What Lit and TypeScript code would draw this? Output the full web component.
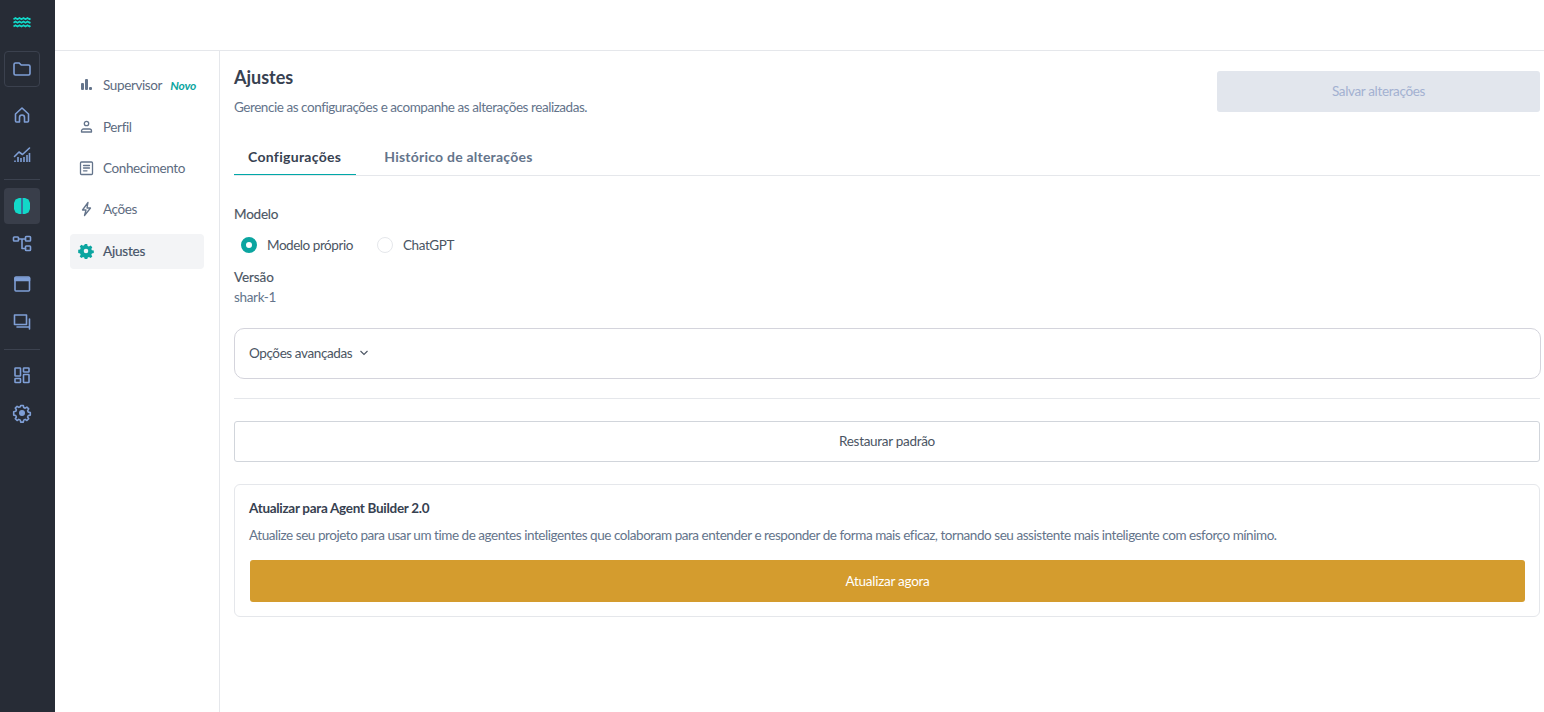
import { LitElement, html, css, svg } from "lit";
import { customElement } from "lit/decorators.js";

const railIcon = (body: unknown) =>
  html`<svg viewBox="0 0 20 20" width="20" height="20" fill="none" stroke="currentColor" stroke-width="1.6" stroke-linecap="round" stroke-linejoin="round">${body}</svg>`;
const navIcon = (body: unknown) =>
  html`<svg viewBox="0 0 16 16" width="16" height="16" fill="none" stroke="currentColor" stroke-width="1.3" stroke-linecap="round" stroke-linejoin="round">${body}</svg>`;

const gearPath = "M8.700 2.500h2.600l.4 2 1.500.7 1.700-1.100 1.800 1.800-1.100 1.700.7 1.500 2 .4v2.600l-2 .4-.7 1.500 1.100 1.700-1.800 1.800-1.700-1.100-1.500.7-.4 2H8.700l-.4-2-1.500-.7-1.700 1.100-1.800-1.800 1.100-1.700-.7-1.500-2-.4V8.700l2-.4.7-1.500-1.100-1.700 1.800-1.800 1.700 1.100 1.500-.7z";

@customElement("app-root")
export class AppRoot extends LitElement {
  static styles = css`
    :host { display: block; height: 712px; font-family: Lato, "Liberation Sans", sans-serif; font-size: 13.5px; color: #4b5563; background: #fff; overflow: hidden; }
    .shell { display: flex; height: 712px; }
    .rail { width: 55px; flex: none; background: #272c36; display: flex; flex-direction: column; align-items: flex-start; color: #7f9fd6; padding: 12px 0 0 4px; box-sizing: border-box; }
    .logo { width: 36px; height: 20px; display: flex; align-items: center; justify-content: center; color: #12d8c8; }
    .rbtn { width: 36px; height: 35px; display: flex; align-items: center; justify-content: center; border-radius: 4px; box-sizing: border-box; }
    .rbtn.folder { border: 1px solid #3b414e; margin-top: 19px; height: 36px; padding-bottom: 1px; }
    .rbtn.home { margin-top: 10px; }
    .rbtn.chart { margin-top: 5px; }
    .sep { width: 36px; height: 1px; background: #3c424f; flex: none; }
    .sep.a { margin: 7px 0 8px; }
    .sep.b { margin: 10px 0 7px; }
    .rbtn.ai { background: #393e4a; color: #12d8c8; height: 36px; }
    .rbtn.g2 { margin-top: 2px; }
    .rbtn.g3 { margin-top: 3px; }
    .rbtn.g5 { margin-top: 5px; }
    .main { flex: 1; display: flex; flex-direction: column; min-width: 0; }
    .topbar { height: 51px; flex: none; box-sizing: border-box; border-bottom: 1px solid #e5e7eb; }
    .body { flex: 1; display: flex; min-height: 0; }
    .side { width: 165px; flex: none; box-sizing: border-box; border-right: 1px solid #e5e7eb; padding: 18px 15px 0; display: flex; flex-direction: column; gap: 7px; }
    .item { height: 34px; display: flex; align-items: center; gap: 9px; padding-left: 8px; border-radius: 4px; color: #5d6b80; letter-spacing: -0.38px; box-sizing: border-box; }
    .item svg { color: #64748b; flex: none; }
    .item.first { margin: -1px 0 1px; }
    .item.active { height: 35px; margin-top: 1px; padding-bottom: 1px; background: #f3f4f6; color: #475569; -webkit-text-stroke: 0.2px #475569; letter-spacing: -0.2px; }
    .item.active svg { color: #0ba5a0; }
    .novo { color: #0ba5a0; font-size: 12px; font-style: italic; font-weight: 700; letter-spacing: -0.15px; margin-left: -1px; }
    .content { flex: 1; min-width: 0; padding: 14px 4px 0 14px; }
    .head { display: flex; justify-content: space-between; }
    h1 { margin: 0; font-size: 18px; line-height: 24px; font-weight: 700; color: #374151; }
    .sub { margin: 8px 0 0; line-height: 20px; color: #64748b; letter-spacing: -0.45px; }
    .save { width: 323px; height: 41px; margin-top: 6px; padding: 0 0 1px; border: 0; border-radius: 3px; background: #e2e6ed; color: #a3b1d1; font: 13.5px Lato, sans-serif; letter-spacing: -0.35px; }
    .tabs { display: flex; margin-top: 20px; border-bottom: 1px solid #e5e7eb; height: 39px; box-sizing: border-box; }
    .tab { font-size: 14px; font-weight: 700; line-height: 20px; padding: 10px 15px 0; height: 38px; box-sizing: border-box; color: #64748b; letter-spacing: 0.23px; }
    .tab.on { color: #374151; border-bottom: 1px solid #00a8a8; padding: 10px 15px 0 14px; margin-right: 13px; letter-spacing: 0.3px; }
    .label { line-height: 20px; color: #4b5563; -webkit-text-stroke: 0.15px #4b5563; letter-spacing: -0.2px; }
    .l1 { margin-top: 28px; }
    .radios { display: flex; align-items: center; margin: 11px 0 0 7px; height: 20px; color: #4b5563; letter-spacing: -0.45px; }
    .dot { width: 16px; height: 16px; border-radius: 50%; box-sizing: border-box; flex: none; margin-right: 10px; }
    .dot.on { border: 5px solid #0ba5a0; background: #fff; }
    .dot.off { border: 1px solid #e5e7eb; background: #fff; margin-left: 24px; }
    .chat { letter-spacing: -0.4px; }
    .l2 { margin-top: 12px; letter-spacing: -0.1px; }
    .ver { line-height: 20px; color: #64748b; letter-spacing: -0.34px; }
    .adv { margin-top: 21px; height: 51px; padding: 0 0 2px 14px; border: 1px solid #d4d4dc; border-radius: 10px; box-sizing: border-box; width: 1307px; display: flex; align-items: center; gap: 7px; color: #4b5563; letter-spacing: -0.4px; }
    .hr { height: 1px; background: #e5e7eb; margin-top: 19px; }
    .restore { display: flex; align-items: center; justify-content: center; margin-top: 22px; height: 41px; padding-bottom: 1px; box-sizing: border-box; border: 1px solid #d1d5db; border-radius: 3px; color: #4b5563; letter-spacing: -0.3px; }
    .card { margin-top: 22px; border: 1px solid #e5e7eb; border-radius: 6px; padding: 14px; height: 133px; box-sizing: border-box; }
    .card h2 { margin: 0; font-size: 13.5px; line-height: 18px; font-weight: 700; color: #374151; letter-spacing: -0.3px; }
    .card p { margin: 8px 0 0; line-height: 20px; color: #64748b; letter-spacing: -0.45px; }
    .update { display: flex; align-items: center; justify-content: center; margin: 15px 0 0 1px; height: 42px; padding-bottom: 1px; box-sizing: border-box; border-radius: 3px; background: #d49c2e; color: #fff; letter-spacing: -0.25px; }
  `;

  render() {
    return html`<div class="shell">
      <nav class="rail">
        <div class="logo"><svg width="18" height="11" viewBox="0 0 18 11" fill="none" stroke="currentColor" stroke-width="1.7"><path d="M.5 2.200 2.500 1l2 1.200 2-1.200 2 1.200 2-1.200 2 1.200 2-1.200 2 1.200 1-.6"/><path d="M.5 5.800l2-1.200 2 1.200 2-1.200 2 1.200 2-1.200 2 1.200 2-1.200 2 1.200 1-.6"/><path d="M.5 9.400l2-1.200 2 1.200 2-1.200 2 1.200 2-1.200 2 1.200 2-1.200 2 1.200 1-.6"/></svg></div>
        <div class="rbtn folder">${railIcon(svg`<path d="M2 5.500a1.500 1.500 0 0 1 1.500-1.500h3.700l2 2h7.300A1.500 1.500 0 0 1 18 7.500v7a1.500 1.500 0 0 1-1.500 1.500h-13A1.500 1.500 0 0 1 2 14.500z"/>`)}</div>
        <div class="rbtn home">${railIcon(svg`<path d="M3.500 9 10 3l6.500 6v7a1 1 0 0 1-1 1H12.500v-4.500a2.500 2.500 0 0 0-5 0V17H4.500a1 1 0 0 1-1-1z"/>`)}</div>
        <div class="rbtn chart">${railIcon(svg`<path d="M2.500 11.500 7 7l3.500 2.500L17.500 3"/><path d="M3 17v-1.500M6 17v-5M9 17v-4M12 17v-5M15 17v-7M17.500 17V8" stroke-linecap="butt"/>`)}</div>
        <div class="sep a"></div>
        <div class="rbtn ai"><svg width="16" height="16" viewBox="0 0 16 16"><path fill="currentColor" d="M7.500 0H5L1.500 1.500 0 5v6l1.500 3.500L5 16h2.500z"/><path fill="currentColor" d="M8.500 0H11l3.500 1.500L16 5v6l-1.500 3.500L11 16H8.500z"/><path fill="#4a5bb0" d="M7.500 0h1v16h-1z"/></svg></div>
        <div class="rbtn g2">${railIcon(svg`<rect x="1.500" y="3" width="5" height="4" rx=".8"/><rect x="13.500" y="2.500" width="5" height="4.500" rx=".8"/><rect x="13.500" y="12" width="5" height="4.500" rx=".8"/><path d="M6.500 5h7M10 5v9.500h3.500"/>`)}</div>
        <div class="rbtn g5">${railIcon(svg`<rect x="3" y="3" width="14.500" height="14" rx="1"/><path d="M3 4h14.500v2.500H3z" fill="currentColor"/>`)}</div>
        <div class="rbtn g3">${railIcon(svg`<path d="M2.500 3h12v9.500h-12z"/><path d="M5 15h12.500V7M17.500 15v2"/>`)}</div>
        <div class="sep b"></div>
        <div class="rbtn">${railIcon(svg`<rect x="3" y="3" width="5.500" height="8" rx=".6"/><rect x="11.500" y="3" width="5.500" height="4" rx=".6"/><rect x="3" y="13.500" width="5.500" height="4" rx=".6"/><rect x="11.500" y="9.500" width="5.500" height="8" rx=".6"/>`)}</div>
        <div class="rbtn g3">${railIcon(svg`<path d="${gearPath}"/><circle cx="10" cy="10" r="2.200" fill="currentColor"/>`)}</div>
      </nav>
      <div class="main">
        <div class="topbar"></div>
        <div class="body">
          <aside class="side">
            <div class="item first"><svg viewBox="0 0 16 16" width="16" height="16" fill="currentColor"><rect x="3" y="6" width="3" height="7" rx="1"/><rect x="7" y="2" width="3" height="11" rx="1"/><rect x="11" y="10" width="3" height="3" rx="1"/></svg><span>Supervisor</span><span class="novo">Novo</span></div>
            <div class="item">${navIcon(svg`<circle cx="8.500" cy="4.500" r="2.200"/><path d="M3.500 13v-1a2 2 0 0 1 2-2h6a2 2 0 0 1 2 2v1z"/>`)}<span>Perfil</span></div>
            <div class="item">${navIcon(svg`<rect x="2.500" y="2" width="12" height="12.500" rx="1"/><path d="M5.500 5.500h6M5.500 8h6M5.500 10.800h3.500"/>`)}<span>Conhecimento</span></div>
            <div class="item">${navIcon(svg`<path d="M10 1.500 4.500 9H8l-1.500 5.500L12.500 7H9z"/>`)}<span>Ações</span></div>
            <div class="item active"><svg viewBox="0 0 16 16" width="16" height="16" fill="currentColor"><path fill-rule="evenodd" d="M6.800 1h2.400l.4 1.900 1.300.6 1.700-1 1.700 1.700-1 1.700.6 1.300 1.900.4v2.400l-1.900.4-.6 1.300 1 1.700-1.700 1.700-1.700-1-1.300.6-.4 1.900H6.800l-.4-1.900-1.300-.6-1.700 1-1.700-1.700 1-1.700-.6-1.300-1.900-.4V6.800l1.900-.4.6-1.300-1-1.700 1.700-1.700 1.700 1 1.300-.6zM8 5.700a2.300 2.300 0 1 0 0 4.600 2.300 2.300 0 0 0 0-4.600z"/></svg><span>Ajustes</span></div>
          </aside>
          <main class="content">
            <div class="head">
              <div><h1>Ajustes</h1><p class="sub">Gerencie as configurações e acompanhe as alterações realizadas.</p></div>
              <button class="save">Salvar alterações</button>
            </div>
            <div class="tabs"><div class="tab on">Configurações</div><div class="tab">Histórico de alterações</div></div>
            <div class="label l1">Modelo</div>
            <div class="radios"><span class="dot on"></span>Modelo próprio<span class="dot off"></span><span class="chat">ChatGPT</span></div>
            <div class="label l2">Versão</div>
            <div class="ver">shark-1</div>
            <div class="adv"><span>Opções avançadas</span><svg width="10" height="6" viewBox="0 0 10 6" fill="none" stroke="#4b5563" stroke-width="1.100"><path d="m1.500 1 3.500 3.500L8.500 1"/></svg></div>
            <div class="hr"></div>
            <div class="restore">Restaurar padrão</div>
            <section class="card">
              <h2>Atualizar para Agent Builder 2.0</h2>
              <p>Atualize seu projeto para usar um time de agentes inteligentes que colaboram para entender e responder de forma mais eficaz, tornando seu assistente mais inteligente com esforço mínimo.</p>
              <div class="update">Atualizar agora</div>
            </section>
          </main>
        </div>
      </div>
    </div>`;
  }
}
